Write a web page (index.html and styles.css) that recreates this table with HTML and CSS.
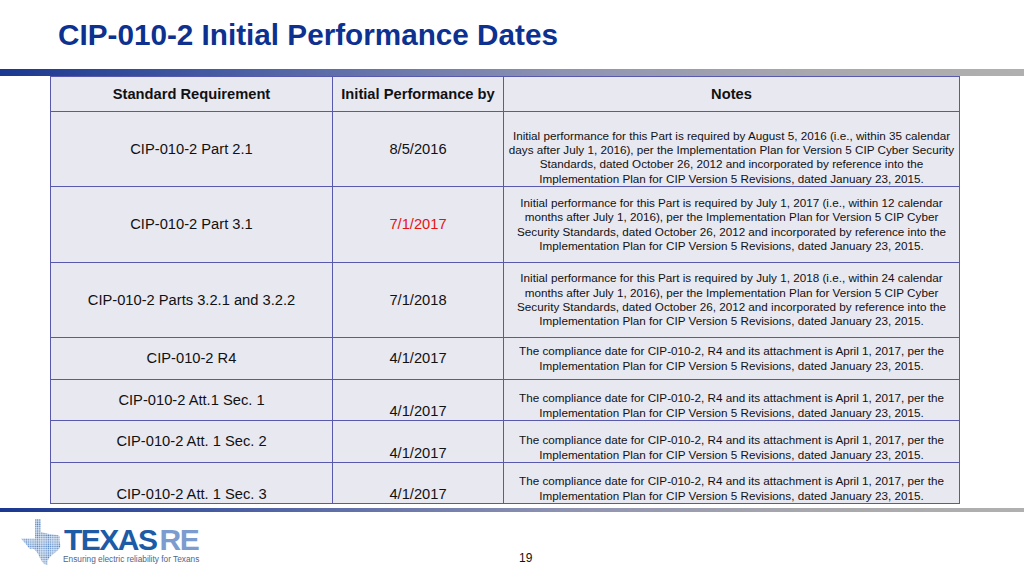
FILE: index.html
```html
<!DOCTYPE html>
<html lang="en">
<head>
<meta charset="utf-8">
<title>CIP-010-2 Initial Performance Dates</title>
<link rel="stylesheet" href="styles.css">
</head>
<body>
<div class="slide">
  <header class="title-wrap">
    <h1 class="title">CIP-010-2 Initial Performance Dates</h1>
  </header>
  <div class="bar bar-top"></div>

  <div class="grid">
    <div class="cell head">Standard Requirement</div>
    <div class="cell head">Initial Performance by</div>
    <div class="cell head">Notes</div>

    <div class="cell r1">CIP-010-2 Part 2.1</div>
    <div class="cell r1">8/5/2016</div>
    <div class="cell r1 note bottom">Initial performance for this Part is required by August 5, 2016 (i.e., within 35 calendar days after July 1, 2016), per the Implementation Plan for Version 5 CIP Cyber Security Standards, dated October 26, 2012 and incorporated by reference into the Implementation Plan for CIP Version 5 Revisions, dated January 23, 2015.</div>

    <div class="cell r2">CIP-010-2 Part 3.1</div>
    <div class="cell r2 red">7/1/2017</div>
    <div class="cell r2 note">Initial performance for this Part is required by July 1, 2017 (i.e., within 12 calendar months after July 1, 2016), per the Implementation Plan for Version 5 CIP Cyber Security Standards, dated October 26, 2012 and incorporated by reference into the Implementation Plan for CIP Version 5 Revisions, dated January 23, 2015.</div>

    <div class="cell r3">CIP-010-2 Parts 3.2.1 and 3.2.2</div>
    <div class="cell r3">7/1/2018</div>
    <div class="cell r3 note">Initial performance for this Part is required by July 1, 2018 (i.e., within 24 calendar months after July 1, 2016), per the Implementation Plan for Version 5 CIP Cyber Security Standards, dated October 26, 2012 and incorporated by reference into the Implementation Plan for CIP Version 5 Revisions, dated January 23, 2015.</div>

    <div class="cell r4">CIP-010-2 R4</div>
    <div class="cell r4">4/1/2017</div>
    <div class="cell r4 note">The compliance date for CIP-010-2, R4 and its attachment is April 1, 2017, per the Implementation Plan for CIP Version 5 Revisions, dated January 23, 2015.</div>

    <div class="cell r5">CIP-010-2 Att.1 Sec. 1</div>
    <div class="cell r5 bottom">4/1/2017</div>
    <div class="cell r5 note bottom">The compliance date for CIP-010-2, R4 and its attachment is April 1, 2017, per the Implementation Plan for CIP Version 5 Revisions, dated January 23, 2015.</div>

    <div class="cell r6">CIP-010-2 Att. 1 Sec. 2</div>
    <div class="cell r6 bottom">4/1/2017</div>
    <div class="cell r6 note bottom">The compliance date for CIP-010-2, R4 and its attachment is April 1, 2017, per the Implementation Plan for CIP Version 5 Revisions, dated January 23, 2015.</div>

    <div class="cell r7 bottom">CIP-010-2 Att. 1 Sec. 3</div>
    <div class="cell r7 bottom">4/1/2017</div>
    <div class="cell r7 note bottom">The compliance date for CIP-010-2, R4 and its attachment is April 1, 2017, per the Implementation Plan for CIP Version 5 Revisions, dated January 23, 2015.</div>
  </div>

  <div class="bar bar-bottom"></div>

  <footer class="footer">
    <div class="logo">
      <svg class="texas" width="40" height="46" viewBox="0 0 40 46" aria-hidden="true">
        <defs>
          <pattern id="dots" width="2.2" height="2.2" patternUnits="userSpaceOnUse">
            <rect x="0.3" y="0.3" width="1.5" height="1.5" fill="#5585c2"/>
          </pattern>
        </defs>
        <polygon fill="url(#dots)" points="14,0 20,0 20,13 24,14 28,15 32,15.5 36,16 38.5,17 38.5,22 39.5,27 38,30 35,33 31,36 28,39 26.5,42 26.5,46 23,45 20.5,42 18.5,38 16.5,34 14,31 11.5,29.5 9,30 7,28 5,25 2,22 0,19.5 14,19.5"/>
      </svg>
      <div class="logo-text">
        <div class="logo-word"><span class="tx">TEXAS</span><span class="re">RE</span></div>
        <div class="tagline">Ensuring electric reliability for Texans</div>
      </div>
    </div>
    <div class="page-num">19</div>
  </footer>
</div>
</body>
</html>
```

FILE: styles.css
```css
* { box-sizing: border-box; }

html, body {
  margin: 0;
  padding: 0;
  background: #ffffff;
}

body {
  font-family: "Liberation Sans", Arial, sans-serif;
  color: #111111;
}

.slide {
  width: 1024px;
  height: 576px;
  overflow: hidden;
}

.title-wrap {
  padding: 18px 0 0 58px;
}

.title {
  margin: 0;
  font-size: 29.7px;
  line-height: 34px;
  font-weight: bold;
  color: #0c3190;
}

.bar {
  width: 100%;
  background: linear-gradient(to right, #1a3890 0%, #4e62a4 25%, #8e93b2 55%, #a9a9ad 80%, #b0b0b0 100%);
}

.bar-top {
  margin-top: 17px;
  height: 7px;
}

.grid {
  margin-left: 50px;
  width: 910px;
  display: grid;
  grid-template-columns: 281px 170px 455px;
  grid-template-rows: 34px 74px 75px 74px 41px 40px 41px 40px;
  gap: 1px;
  padding: 1px;
  background: #5858ac;
}

.cell {
  background: #e8e8f1;
  display: flex;
  align-items: center;
  justify-content: center;
  text-align: center;
  font-size: 14.7px;
  line-height: 17px;
  padding: 0 4px;
}

.head {
  font-weight: bold;
}

.red {
  color: #e21414;
}

.note {
  font-size: 11.7px;
  line-height: 14.3px;
  padding: 0 1px;
}

.bottom {
  align-items: flex-end;
}

.bar-bottom {
  margin-top: 4px;
  height: 4px;
}

.footer {
  display: flex;
  align-items: flex-start;
  padding: 7px 0 0 21px;
}

.logo {
  display: flex;
  align-items: flex-start;
  width: 200px;
}

.texas {
  flex: none;
  display: block;
}

.logo-text {
  display: flex;
  flex-direction: column;
  margin-left: 3px;
  padding-top: 7px;
}

.logo-word {
  font-size: 30px;
  line-height: 28px;
  font-weight: bold;
  letter-spacing: -1.5px;
  white-space: nowrap;
}

.tx { color: #1d5ba7; }

.re {
  color: #7c9ccf;
  margin-left: 3px;
}

.tagline {
  font-size: 8.3px;
  line-height: 10px;
  color: #4f6688;
  white-space: nowrap;
  margin-left: -1px;
}

.page-num {
  margin-left: 298px;
  padding-top: 32px;
  font-size: 12px;
  line-height: 14px;
  color: #111111;
}
```
